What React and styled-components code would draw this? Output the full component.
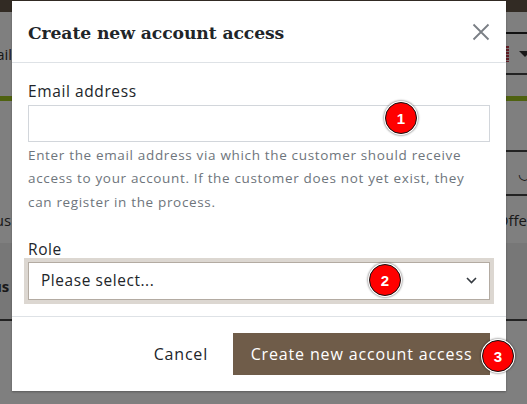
import React from "react";
import styled, { createGlobalStyle } from "styled-components";

const GlobalStyle = createGlobalStyle`
  html, body { margin: 0; padding: 0; }
  body { font-family: "Open Sans", "DejaVu Sans", sans-serif; }
  * { box-sizing: border-box; }
`;

const Page = styled.div`
  position: relative;
  width: 527px;
  height: 404px;
  overflow: hidden;
  background: #ffffff;
  display: flex;
  flex-direction: column;
  font-family: "Open Sans", sans-serif;
  color: #333;
`;

const TopBar = styled.div`
  height: 12px;
  background: #645648;
  flex: none;
`;

const Stripe = styled.div`
  height: ${(p) => p.$h}px;
  flex: none;
  display: flex;
  align-items: center;
  justify-content: space-between;
  background: ${(p) => p.$bg || "#fff"};
  font-size: 15px;
  font-weight: ${(p) => (p.$bold ? 700 : 400)};
  color: #333;
`;

const Rule = styled.div`
  height: 2px;
  flex: none;
  margin-left: ${(p) => p.$from || 0}px;
  background: ${(p) => p.$c || "#333"};
`;

const GreenBar = styled.div`
  height: 5px;
  flex: none;
  background: #9ec421;
`;

const EdgeText = styled.span`
  margin-left: ${(p) => p.$ml || 0}px;
  margin-right: ${(p) => p.$mr || 0}px;
  margin-top: ${(p) => p.$mt || 0}px;
  white-space: nowrap;
`;

const Flag = styled.span`
  display: inline-flex;
  align-items: center;
  gap: 10px;
  margin-right: -4px;
`;

const FlagBox = styled.span`
  width: 14px;
  height: 16px;
  background: repeating-linear-gradient(
    to bottom,
    #c43a4a 0 2px,
    #f4e0e4 2px 3px
  );
`;

const Caret = styled.span`
  width: 0;
  height: 0;
  border-left: 6px solid transparent;
  border-right: 6px solid transparent;
  border-top: 6px solid #333;
`;

const Overlay = styled.div`
  position: absolute;
  inset: 0;
  background: rgba(0, 0, 0, 0.5);
`;

const Modal = styled.div`
  position: absolute;
  left: 12px;
  top: 1px;
  width: 494px;
  height: 390px;
  background: #fff;
  display: flex;
  flex-direction: column;
  box-shadow: 0 1px 2px rgba(0, 0, 0, 0.3);
`;

const Header = styled.div`
  height: 62px;
  flex: none;
  display: flex;
  align-items: center;
  justify-content: space-between;
  padding: 0 16px;
  border-bottom: 1px solid #dee2e6;
`;

const Title = styled.h2`
  margin: 0;
  font-family: "DejaVu Serif", serif;
  font-weight: 700;
  font-size: 17.2px;
  letter-spacing: -0.1px;
  color: #212529;
  padding-top: 2px;
`;

const CloseButton = styled.button`
  border: 0;
  background: none;
  padding: 0;
  width: 18px;
  height: 18px;
  display: flex;
  cursor: pointer;
`;

const Body = styled.div`
  padding: 17px 16px 0;
  display: flex;
  flex-direction: column;
`;

const Label = styled.label`
  font-size: 15.5px;
  letter-spacing: 0.6px;
  line-height: 22px;
  color: #212529;
  margin-bottom: ${(p) => (p.$mb !== undefined ? p.$mb : 3)}px;
  margin-top: ${(p) => p.$mt || 0}px;
`;

const TextInput = styled.input`
  height: 37px;
  width: 100%;
  border: 1px solid #d2d6db;
  background: #fff;
  font: inherit;
  padding: 0 12px;
  outline: none;
`;

const Help = styled.p`
  margin: 2px 0 0;
  font-size: 13.5px;
  letter-spacing: 0.66px;
  line-height: 23.3px;
  color: #6e757c;
`;

const SelectWrap = styled.div`
  margin-top: 1px;
  height: 38px;
  border: 1px solid #b3aba2;
  box-shadow: 0 0 0 4px #dcd7d1;
  display: flex;
  align-items: center;
  justify-content: space-between;
  padding: 0 12px;
  background: #fff;
  font-size: 15.4px;
  letter-spacing: 0.6px;
  color: #212529;
`;

const Footer = styled.div`
  margin-top: 16px;
  border-top: 1px solid #dee2e6;
  padding: 16px 16px 0;
  display: flex;
  justify-content: flex-end;
  align-items: center;
  gap: 25px;
`;

const GhostButton = styled.button`
  border: 0;
  background: none;
  font: inherit;
  font-size: 16px;
  letter-spacing: 0.8px;
  color: #212529;
  padding: 0;
  height: 42px;
  cursor: pointer;
`;

const PrimaryButton = styled.button`
  border: 0;
  background: #6f5c49;
  color: #fff;
  font: inherit;
  font-size: 16px;
  letter-spacing: 0.85px;
  height: 42px;
  width: 257px;
  padding: 0;
  cursor: pointer;
`;

const Badge = styled.span`
  position: absolute;
  left: ${(p) => p.$x - 16}px;
  top: ${(p) => p.$y - 16}px;
  width: 32px;
  height: 32px;
  border-radius: 50%;
  background: #ff0000;
  border: 1.5px solid #111;
  box-shadow: 0 0 0 1px #fff, 0 0 2px 1.5px rgba(0, 0, 0, 0.45);
  color: #fff;
  font-family: "Liberation Sans", Arial, sans-serif;
  font-weight: 700;
  font-size: 15px;
  display: flex;
  align-items: center;
  justify-content: center;
`;

export default function App() {
  return (
    <>
      <GlobalStyle />
      <Page>
        <TopBar />
        <Stripe $h={20} />
        <Rule $from={440} $c="#222" />
        <Stripe $h={39}>
          <EdgeText $ml={-26}>Email</EdgeText>
          <Flag>
            <FlagBox />
            <Caret />
          </Flag>
        </Stripe>
        <Rule $from={440} $c="#444" />
        <Stripe $h={21} />
        <GreenBar />
        <Stripe $h={49} />
        <Rule $from={440} $c="#444" />
        <Stripe $h={42}>
          <span />
          <EdgeText $mr={-4}>◡</EdgeText>
        </Stripe>
        <Rule $from={440} $c="#444" />
        <Stripe $h={47}>
          <EdgeText $ml={-18}>Plus</EdgeText>
          <EdgeText $mr={0}>Offe</EdgeText>
        </Stripe>
        <Stripe $h={76} $bg="#efefef" $bold>
          <EdgeText $ml={-22} $mt={10}>Plus</EdgeText>
        </Stripe>
        <Rule $c="#444" />
        <Stripe $h={80} />
        <Overlay />
        <Modal>
          <Header>
            <Title>Create new account access</Title>
            <CloseButton aria-label="Close">
              <svg width="18" height="18" viewBox="0 0 18 18">
                <path
                  d="M1.5 1.5 L16.5 16.5 M16.5 1.5 L1.5 16.5"
                  stroke="#7a7f85"
                  strokeWidth="1.8"
                  fill="none"
                />
              </svg>
            </CloseButton>
          </Header>
          <Body>
            <Label>Email address</Label>
            <TextInput type="email" />
            <Help>
              Enter the email address via which the customer should receive
              access to your account. If the customer does not yet exist, they
              can register in the process.
            </Help>
            <Label $mt={24} $mb={1}>Role</Label>
            <SelectWrap>
              <span>Please select...</span>
              <svg width="11" height="7" viewBox="0 0 11 7">
                <path
                  d="M1 1 L5.5 5.5 L10 1"
                  stroke="#343a40"
                  strokeWidth="1.6"
                  fill="none"
                />
              </svg>
            </SelectWrap>
          </Body>
          <Footer>
            <GhostButton>Cancel</GhostButton>
            <PrimaryButton>Create new account access</PrimaryButton>
          </Footer>
        </Modal>
        <Badge $x={401} $y={118}>1</Badge>
        <Badge $x={385} $y={280}>2</Badge>
        <Badge $x={498} $y={356}>3</Badge>
      </Page>
    </>
  );
}
